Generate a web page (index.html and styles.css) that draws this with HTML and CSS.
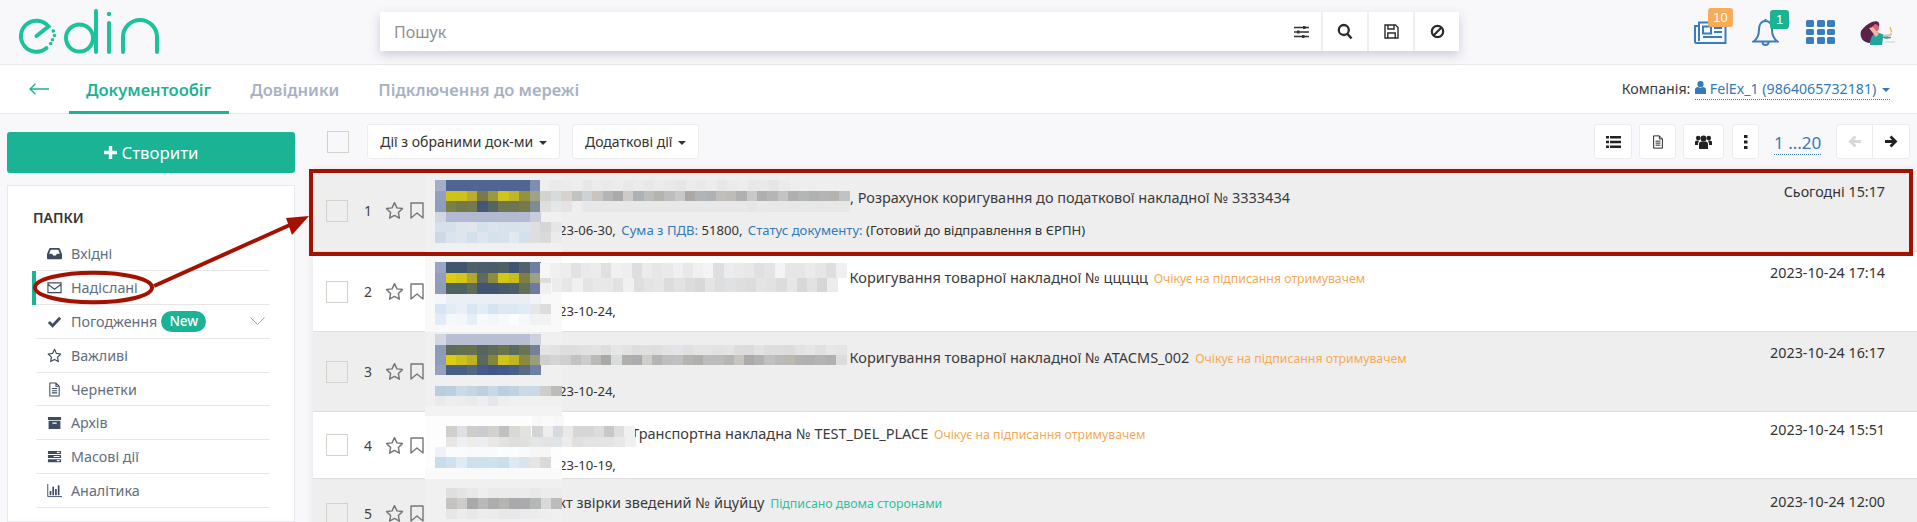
FILE: index.html
```html
<!DOCTYPE html>
<html lang="en">
<head>
    <meta charset="UTF-8">
    <meta name="viewport" content="width=device-width, initial-scale=1.0">
    <title>EDIN - Документообіг</title>
    <link rel="stylesheet" href="styles.css">
</head>
<body>

    <!-- Shared icons -->
    <svg class="icon-defs" xmlns="http://www.w3.org/2000/svg">
        <symbol id="i-star" viewBox="0 0 18 18"><path d="M9 1.6l2.3 4.9 5.2.7-3.8 3.7.9 5.4L9 13.700l-4.600 2.600.9-5.400L1.500 7.200l5.200-.7z" fill="none" stroke="currentColor" stroke-width="1.400" stroke-linejoin="round"/></symbol>
        <symbol id="i-bookmark" viewBox="0 0 16 18"><path d="M2 1.500h12v15l-6-5-6 5z" fill="none" stroke="currentColor" stroke-width="1.400" stroke-linejoin="round"/></symbol>
        <symbol id="i-inbox" viewBox="0 0 16 16"><path fill-rule="evenodd" d="M3.500 2h9c.5 0 .9.3 1.100.7L16 8.500V13a1 1 0 0 1-1 1H1a1 1 0 0 1-1-1V8.500l2.400-5.800C2.600 2.300 3 2 3.500 2zM4 4L2.300 8.300h3.200l1 1.700h3l1-1.700h3.200L12 4z"/></symbol>
        <symbol id="i-envelope" viewBox="0 0 16 16"><path d="M1 3h14v10.500H1zM1 4.500l7 5.300 7-5.300" fill="none" stroke="currentColor" stroke-width="1.200"/></symbol>
        <symbol id="i-check" viewBox="0 0 16 16"><path d="M2 8.500l4 4 8-8.500" fill="none" stroke="currentColor" stroke-width="3"/></symbol>
        <symbol id="i-file" viewBox="0 0 16 16"><path d="M3 1h6.500L13 4.500V15H3zM9.500 1v3.500H13M5.200 7h5.600M5.200 9.300h5.600M5.200 11.600h5.600" fill="none" stroke="currentColor" stroke-width="1.100"/></symbol>
        <symbol id="i-archive" viewBox="0 0 16 16"><path fill-rule="evenodd" d="M1 2h14v3.200H1zM1.700 6.200h12.600V15H1.700zM5.700 8v1.300h4.600V8z"/></symbol>
        <symbol id="i-tasks" viewBox="0 0 16 16"><path fill-rule="evenodd" d="M1 2h14v3.300H1zM1 6.400h14v3.300H1zM1 10.800h14v3.300H1zM10.500 3v1.200h3V3zM7 7.400v1.200h6.500V7.400zM10.500 11.800V13h3v-1.200z"/></symbol>
        <symbol id="i-chart" viewBox="0 0 16 16"><path d="M.8 1v13.500H16" fill="none" stroke="currentColor" stroke-width="1"/><path d="M2.800 8.500h1.800v4.500H2.800zM5.700 4h1.800v9H5.700zM8.600 6.500h1.800V13H8.600zM11.500 2.500h1.800V13h-1.800z"/></symbol>
    </svg>

    <header class="top-bar">
        <svg class="logo" viewBox="0 0 160 55" fill="none" stroke="#1cc29a" stroke-width="4" stroke-linecap="round">
            <path d="M26.500 31L38.500 21.500A15.500 15.500 0 1 0 36.500 43"/>
            <circle cx="69.500" cy="33" r="13.500"/>
            <path d="M86 6V47M99 18V47M113 47V32a17 17 0 0 1 34 0V47"/>
            <g fill="#1cc29a" stroke="none">
                <circle cx="43.300" cy="26" r="1.800"/>
                <circle cx="44.500" cy="30.500" r="1.800"/>
                <circle cx="42.500" cy="34.700" r="1.800"/>
                <circle cx="40.700" cy="38.500" r="1.800"/>
                <circle cx="99" cy="9" r="2.200"/>
            </g>
        </svg>

        <div class="search">
            <input class="search-input" type="text" placeholder="Пошук">
            <span class="search-filter">
                <svg width="17" height="14" viewBox="0 0 17 14"><path d="M1 2.500h15M1 7h15M1 11.500h15" stroke="#333" stroke-width="1.300"/><path d="M10 1h2.500v3H10zM4 5.500h2.500v3H4zM9 10h2.500v3H9z" fill="#333"/></svg>
            </span>
            <button class="search-btn">
                <svg width="16" height="17" viewBox="0 0 16 17" fill="none" stroke="#2b2b2b"><circle cx="6.800" cy="7" r="5" stroke-width="2.300"/><path d="M10.500 11l4 4.500" stroke-width="2.600"/></svg>
            </button>
            <button class="search-btn">
                <svg width="15" height="15" viewBox="0 0 15 15" fill="none" stroke="#2b2b2b" stroke-width="1.400"><path d="M1 1h10.500L14 3.500V14H1z"/><path d="M4 1v4h6V1M3.800 14V9h7.400v5"/></svg>
            </button>
            <button class="search-btn">
                <svg width="15" height="15" viewBox="0 0 15 15" fill="none" stroke="#2b2b2b" stroke-width="2.200"><circle cx="7.500" cy="7.500" r="5.700"/><path d="M3.500 11.500l8-8"/></svg>
            </button>
        </div>

        <div class="top-icons">
            <span class="top-icon top-news">
                <svg width="33" height="23" viewBox="0 0 33 23" fill="none" stroke="#3a7dbd" stroke-width="2"><path d="M5 1.500h26.500V22H2.500a1.500 1.500 0 0 1-1.500-1.500V5h4zM5 5v15"/><path d="M9 5.500h8v7H9zM20 7h8M20 11h8M9 16h19"/></svg>
                <span class="top-badge badge-orange">10</span>
            </span>
            <span class="top-icon top-bell">
                <svg width="27" height="29" viewBox="0 0 27 29" fill="none" stroke="#3a7dbd" stroke-width="2"><path d="M13.500 3c-4.500 0-6.500 4-6.500 8.500 0 6-2 9.500-5.500 12h24c-3.500-2.500-5.500-6-5.500-12C20 7 18 3 13.500 3zM13.500 1v2"/><path d="M10.500 24a3 3 0 0 0 6 0"/></svg>
                <span class="top-badge badge-green">1</span>
            </span>
            <span class="top-icon top-grid">
                <i></i><i></i><i></i><i></i><i></i><i></i><i></i><i></i><i></i>
            </span>
            <span class="top-icon top-avatar">
                <svg width="39" height="25" viewBox="0 0 39 25">
                    <path d="M4 11c3-4 6-7 11-9 3-1 6-1 7 1 1 3-1 5-2 7l-7 13C7 23 2 18 4 11z" fill="#5b2249"/>
                    <path d="M15 7l3-3 3 1 1 4-2 3z" fill="#e5606a"/>
                    <path d="M13 25c0-7 3-12 7-13l5 2c3 1 6 3 9 3v1c-3 1-6 1-8 0l-1 7z" fill="#20a5a0"/>
                    <path d="M12 8l4-1 6 7-3 3z" fill="#f5b5a5"/>
                    <path d="M26 15l7-1 1-2 1 2-1 2-8 1z" fill="#f5b5a5"/>
                    <path d="M33 7l1.500 5" stroke="#e9b33c" stroke-width="1.200"/>
                    <path d="M28 22h10" stroke="#dcdcdc" stroke-width="1.500"/>
                </svg>
            </span>
        </div>
    </header>

    <nav class="nav-bar">
        <svg class="back-arrow" width="20" height="12" viewBox="0 0 20 12" fill="none" stroke="#1ab394" stroke-width="1.300"><path d="M20 6H1M6.500.7L1 6l5.500 5.300"/></svg>
        <a class="tab tab-active">Документообіг</a>
        <a class="tab">Довідники</a>
        <a class="tab">Підключення до мережі</a>
        <div class="company">
            Компанія:
            <span class="company-link">
                <svg width="11" height="13" viewBox="0 0 11 13" fill="#337ab7"><circle cx="5.500" cy="3.200" r="3.100"/><path d="M0 13V8.500C0 7 1.500 6 3 6l2.500 1L8 6c1.500 0 3 1 3 2.500V13z"/></svg>
                FelEx_1 (9864065732181)
                <i class="caret caret-blue"></i>
            </span>
        </div>
    </nav>

    <div class="page">
        <aside class="sidebar">
            <button class="create-btn">
                <svg class="create-plus" width="13" height="13" viewBox="0 0 13 13" fill="#fff"><path d="M4.800 0h3.400v4.800H13v3.400H8.200V13H4.800V8.200H0V4.800h4.800z"/></svg>
                Створити
            </button>

            <div class="folders">
                <h5 class="folders-title">ПАПКИ</h5>
                <ul class="folder-list">
                    <li class="folder"><svg class="folder-icon"><use href="#i-inbox"/></svg>Вхідні</li>
                    <li class="folder folder-active"><svg class="folder-icon"><use href="#i-envelope"/></svg>Надіслані</li>
                    <li class="folder">
                        <svg class="folder-icon"><use href="#i-check"/></svg>Погодження
                        <span class="tag-new">New</span>
                        <svg class="folder-chevron" width="15" height="8" viewBox="0 0 15 8" fill="none" stroke="#9aa3b0"><path d="M.5.500l7 7 7-7"/></svg>
                    </li>
                    <li class="folder"><svg class="folder-icon"><use href="#i-star"/></svg>Важливі</li>
                    <li class="folder"><svg class="folder-icon"><use href="#i-file"/></svg>Чернетки</li>
                    <li class="folder"><svg class="folder-icon"><use href="#i-archive"/></svg>Архів</li>
                    <li class="folder"><svg class="folder-icon"><use href="#i-tasks"/></svg>Масові дії</li>
                    <li class="folder"><svg class="folder-icon"><use href="#i-chart"/></svg>Аналітика</li>
                </ul>
            </div>
        </aside>

        <main class="content">
            <div class="toolbar">
                <span class="check"></span>
                <button class="tool-btn tool-actions">Дії з обраними док-ми <i class="caret"></i></button>
                <button class="tool-btn tool-more">Додаткові дії <i class="caret"></i></button>

                <div class="tool-right">
                    <button class="tool-btn tool-icon tool-list">
                        <svg width="15" height="12" viewBox="0 0 15 12" fill="#222"><path d="M0 0h3v2.400H0zM4 0h11v2.400H4zM0 4.800h3v2.400H0zM4 4.800h11v2.400H4zM0 9.600h3V12H0zM4 9.600h11V12H4z"/></svg>
                    </button>
                    <button class="tool-btn tool-icon tool-doc">
                        <svg width="14" height="16" viewBox="0 0 16 16" color="#222"><use href="#i-file"/></svg>
                    </button>
                    <button class="tool-btn tool-icon tool-users">
                        <svg width="17" height="14" viewBox="0 0 17 14" fill="#222"><circle cx="8.500" cy="3.500" r="3"/><circle cx="3.200" cy="3" r="2.300"/><circle cx="13.800" cy="3" r="2.300"/><path d="M4 14V9c0-1.500 1-2.500 2.500-2.500h4C12 6.500 13 7.500 13 9v5zM0 10V7.500C0 6.300.8 5.600 2 5.600h2l-1 3v1.400zM17 10V7.500c0-1.200-.8-1.900-2-1.900h-2l1 3v1.400z"/></svg>
                    </button>
                    <button class="tool-btn tool-icon tool-dots">
                        <svg width="4" height="14" viewBox="0 0 4 14" fill="#222"><path d="M0 0h3.500v3H0zM0 5.500h3.500v3H0zM0 11h3.500v3H0z"/></svg>
                    </button>
                    <span class="pager">1 ...20</span>
                    <div class="pager-arrows">
                        <button class="tool-btn tool-icon tool-prev">
                            <svg width="14" height="13" viewBox="0 0 14 13" fill="none" stroke="#d8d8d8" stroke-width="2.800"><path d="M13 6.500H3M7.500 1.500l-5 5 5 5"/></svg>
                        </button>
                        <button class="tool-btn tool-icon tool-next">
                            <svg width="14" height="13" viewBox="0 0 14 13" fill="none" stroke="#222" stroke-width="2.800"><path d="M1 6.500h10M6.500 1.500l5 5-5 5"/></svg>
                        </button>
                    </div>
                </div>
            </div>

            <section class="doc-list">
                <article class="doc doc-grey doc-first">
                    <span class="check"></span>
                    <span class="doc-num">1</span>
                    <svg class="doc-star"><use href="#i-star"/></svg>
                    <svg class="doc-mark"><use href="#i-bookmark"/></svg>
                    <div class="doc-body">
                        <div class="doc-title title-long">, Розрахунок коригування до податкової накладної № 3333434</div>
                        <div class="doc-sub">23-06-30, <span class="sub-key">Сума з ПДВ:</span> 51800, <span class="sub-key">Статус документу:</span> (Готовий до відправлення в ЄРПН)</div>
                    </div>
                    <time class="doc-date">Сьогодні 15:17</time>
                </article>

                <article class="doc">
                    <span class="check"></span>
                    <span class="doc-num">2</span>
                    <svg class="doc-star"><use href="#i-star"/></svg>
                    <svg class="doc-mark"><use href="#i-bookmark"/></svg>
                    <div class="doc-body">
                        <div class="doc-title title-wide">Коригування товарної накладної № ццццц <span class="status-wait">Очікує на підписання отримувачем</span></div>
                        <div class="doc-sub">23-10-24,</div>
                    </div>
                    <time class="doc-date">2023-10-24 17:14</time>
                </article>

                <article class="doc doc-grey">
                    <span class="check"></span>
                    <span class="doc-num">3</span>
                    <svg class="doc-star"><use href="#i-star"/></svg>
                    <svg class="doc-mark"><use href="#i-bookmark"/></svg>
                    <div class="doc-body">
                        <div class="doc-title title-wide">Коригування товарної накладної № ATACMS_002 <span class="status-wait">Очікує на підписання отримувачем</span></div>
                        <div class="doc-sub">23-10-24,</div>
                    </div>
                    <time class="doc-date">2023-10-24 16:17</time>
                </article>

                <article class="doc doc-short">
                    <span class="check"></span>
                    <span class="doc-num">4</span>
                    <svg class="doc-star"><use href="#i-star"/></svg>
                    <svg class="doc-mark"><use href="#i-bookmark"/></svg>
                    <div class="doc-body">
                        <div class="doc-title title-mid">Транспортна накладна № TEST_DEL_PLACE <span class="status-wait">Очікує на підписання отримувачем</span></div>
                        <div class="doc-sub">23-10-19,</div>
                    </div>
                    <time class="doc-date">2023-10-24 15:51</time>
                </article>

                <article class="doc doc-grey doc-last">
                    <span class="check"></span>
                    <span class="doc-num">5</span>
                    <svg class="doc-star"><use href="#i-star"/></svg>
                    <svg class="doc-mark"><use href="#i-bookmark"/></svg>
                    <div class="doc-body">
                        <div class="doc-title title-short">Акт звірки зведений № йцуйцу <span class="status-done">Підписано двома сторонами</span></div>
                    </div>
                    <time class="doc-date">2023-10-24 12:00</time>
                </article>
            </section>
        </main>
    </div>

    <!-- Blurred-out customer data and the red annotation drawn over the screenshot -->
    <svg class="overlay" width="1917" height="522" viewBox="0 0 1917 522">
        <g id="mosaic" shape-rendering="crispEdges"></g>
        <g fill="none" stroke="#a31200" stroke-width="4">
            <rect x="311" y="171" width="1600" height="83"/>
            <ellipse cx="93.500" cy="287.500" rx="58.500" ry="14.800"/>
            <path d="M154 286L292 224"/>
        </g>
        <path d="M309 216L286 218L292 235z" fill="#a31200"/>
    </svg>

    <script src="mosaic.js"></script>
</body>
</html>
```

FILE: styles.css
```css
* {
    box-sizing: border-box;
}
html, body {
    height: 522px;
    overflow: hidden;
}
body {
    position: relative;
    margin: 0;
    background-color: #f8f8fb;
    color: #333;
    font-family: "Noto Sans", "Open Sans", sans-serif;
    font-size: 14px;
}
button {
    font-family: inherit;
    cursor: pointer;
}
.icon-defs {
    display: none;
}

/* Top bar */
.top-bar {
    display: flex;
    align-items: center;
    height: 65px;
    padding: 0 21px 0 10px;
    border-bottom: 1px solid #e7e9ef;
}
.logo {
    flex: none;
    width: 160px;
    height: 55px;
    margin-right: 210px;
}
.search {
    display: flex;
    align-items: stretch;
    width: 1079px;
    height: 39px;
    margin-top: -1px;
    background-color: #fff;
    box-shadow: 0 4px 10px rgba(70, 75, 110, 0.25);
}
.search-input {
    flex: 1;
    min-width: 0;
    padding: 0 14px;
    border: none;
    outline: none;
    color: #555;
    font-family: inherit;
    font-size: 16px;
}
.search-input::placeholder {
    color: #8f8f8f;
}
.search-filter {
    display: flex;
    align-items: center;
    padding-right: 11px;
}
.search-btn {
    display: flex;
    align-items: center;
    justify-content: center;
    width: 46px;
    padding: 0;
    border: none;
    border-left: 2px solid #eeeeee;
    background: none;
}
.top-icons {
    display: flex;
    align-items: center;
    margin-left: auto;
}
.top-icon {
    position: relative;
    display: block;
}
.top-icon svg {
    display: block;
}
.top-bell {
    margin-left: 25px;
}
.top-grid {
    display: grid;
    grid-template-columns: repeat(3, 8px);
    grid-auto-rows: 6.5px;
    gap: 2px 2.5px;
    margin-left: 27px;
}
.top-grid i {
    border-radius: 1.5px;
    background-color: #3a7dbd;
}
.top-avatar {
    margin-left: 22px;
}
.top-badge {
    position: absolute;
    top: -13px;
    height: 19px;
    border-radius: 3px;
    color: #fff;
    font-family: "Liberation Sans", sans-serif;
    font-size: 13px;
    line-height: 19px;
    text-align: center;
}
.badge-orange {
    left: 14px;
    width: 25px;
    background-color: #f8ac59;
}
.badge-green {
    top: -8px;
    left: 18px;
    width: 19px;
    background-color: #1ab394;
}

/* Tabs */
.nav-bar {
    display: flex;
    align-items: center;
    height: 49px;
    padding: 0 27px 0 29px;
    border-bottom: 1px solid #e7e9ef;
    background-color: #fff;
}
.back-arrow {
    flex: none;
    margin-right: 20px;
}
.tab {
    display: flex;
    align-items: center;
    height: 49px;
    padding: 0 18px;
    margin-right: 3px;
    color: #a8b1c2;
    font-size: 16.5px;
    font-weight: 600;
}
.tab-active {
    padding: 3px 18px 0 17px;
    border-bottom: 3px solid #1ab394;
    color: #1ab394;
}
.company {
    margin-left: auto;
    color: #3a3a3a;
    font-size: 14.200px;
}
.company-link {
    display: inline-block;
    margin-left: 1px;
    padding-bottom: 1px;
    border-bottom: 1px dotted #337ab7;
    color: #337ab7;
}
.caret {
    display: inline-block;
    margin-left: 2px;
    border-top: 4px solid #333;
    border-right: 4px solid transparent;
    border-left: 4px solid transparent;
    vertical-align: 2px;
}
.caret-blue {
    border-top-color: #337ab7;
}

/* Layout */
.page {
    display: flex;
    height: 408px;
    overflow: hidden;
}
.sidebar {
    flex: none;
    width: 313px;
    padding: 18px 18px 0 7px;
}
.create-btn {
    display: flex;
    align-items: center;
    justify-content: center;
    gap: 5px;
    width: 100%;
    height: 41px;
    border: none;
    border-radius: 3px;
    background-color: #1ab394;
    color: #fff;
    font-size: 16.8px;
}
.create-plus {
    flex: none;
}
.folders {
    height: 337px;
    margin-top: 12px;
    padding: 22px 24px 0 28px;
    border: 1px solid #e8e8f0;
    background-color: #fff;
}
.folders-title {
    margin: 0 0 10.5px -3px;
    color: #333;
    font-size: 14px;
    font-weight: 600;
}
.folder-list {
    margin: 0;
    padding: 0;
    list-style: none;
}
.folder {
    display: flex;
    align-items: center;
    height: 33.800px;
    padding-left: 11px;
    border-bottom: 1px solid #e7e7e7;
    color: #626d7e;
    font-size: 14.300px;
}
.folder-active {
    box-shadow: -4px 0 0 #1ab394;
}
.folder-icon {
    flex: none;
    width: 15px;
    height: 15px;
    margin-right: 9px;
    color: #3d4c62;
    fill: #3d4c62;
}
.tag-new {
    margin-left: 4px;
    padding: 0 8px;
    border-radius: 11px;
    background-color: #1ab394;
    color: #fff;
    font-size: 13.500px;
    font-weight: 500;
    line-height: 21px;
}
.folder-chevron {
    margin-left: auto;
    margin-right: 5px;
}

/* Document toolbar */
.content {
    flex: 1;
    min-width: 0;
}
.toolbar {
    display: flex;
    align-items: center;
    height: 35px;
    margin-top: 10px;
    padding: 0 7px 0 14px;
}
.check {
    flex: none;
    display: block;
    width: 22px;
    height: 22px;
    border: 1px solid #d5d2cc;
}
.tool-btn {
    height: 35px;
    padding: 0;
    border: 1px solid #ececec;
    border-radius: 3px;
    background-color: #fff;
    color: #333;
    font-size: 14px;
}
.tool-actions {
    width: 193px;
    margin-left: 18px;
}
.tool-more {
    width: 127px;
    margin-left: 12px;
}
.tool-right {
    display: flex;
    align-items: center;
    margin-left: auto;
}
.tool-icon {
    display: flex;
    align-items: center;
    justify-content: center;
}
.tool-list {
    width: 38px;
}
.tool-doc {
    width: 37px;
    margin-left: 7px;
}
.tool-users {
    width: 41px;
    margin-left: 7px;
}
.tool-dots {
    width: 27px;
    margin-left: 8px;
}
.pager {
    width: 47px;
    margin: 3px 15px 0 15px;
    border-bottom: 1px dotted #337ab7;
    color: #337ab7;
    font-size: 17px;
    line-height: 22px;
    text-align: center;
    white-space: nowrap;
}
.pager-arrows {
    display: flex;
}
.tool-prev {
    width: 37px;
    border-radius: 3px 0 0 3px;
}
.tool-next {
    width: 38px;
    margin-left: -1px;
    border-radius: 0 3px 3px 0;
}

/* Document rows */
.doc-list {
    margin-top: 11px;
    box-shadow: 0 0 8px rgba(60, 60, 90, 0.12);
}
.doc {
    display: flex;
    align-items: center;
    height: 80px;
    padding: 0 32px 0 13px;
    border-bottom: 1px solid #dedede;
    background-color: #fff;
}
.doc-grey {
    background-color: #eeeeee;
}
.doc-first {
    height: 82px;
}
.doc-short {
    height: 67px;
}
.doc-last {
    height: 70px;
}
.doc-num {
    flex: none;
    width: 21px;
    margin-left: 16px;
    color: #444;
    font-size: 14px;
}
.doc-star {
    flex: none;
    width: 19px;
    height: 19px;
    color: #777;
}
.doc-mark {
    flex: none;
    width: 16px;
    height: 19px;
    margin-left: 5px;
    margin-right: 10px;
    color: #777;
}
.doc-body {
    flex: 1;
    align-self: flex-start;
    min-width: 0;
    padding-top: 15px;
}
.doc-first .doc-body {
    padding-top: 17px;
}
.doc-short .doc-body {
    padding-top: 11px;
}
.doc-last .doc-body {
    padding-top: 13px;
}
.doc-title {
    color: #3b3b3b;
    font-size: 14.500px;
    line-height: 20px;
    white-space: nowrap;
}
.title-long {
    padding-left: 415px;
}
.title-wide {
    padding-left: 414.5px;
}
.title-mid {
    padding-left: 196px;
}
.title-short {
    padding-left: 114px;
}
.doc-sub {
    margin-top: 12px;
    padding-left: 124px;
    color: #333;
    font-size: 13.100px;
    line-height: 20px;
}
.doc-first .doc-sub {
    margin-top: 13px;
}
.doc-short .doc-sub {
    margin-top: 10px;
}
.sub-key {
    margin-left: 2px;
    color: #337ab7;
}
.status-wait {
    margin-left: 2px;
    color: #f4a956;
    font-size: 12.300px;
}
.status-done {
    margin-left: 2px;
    color: #2cbfa0;
    font-size: 12.300px;
}
.doc-date {
    flex: none;
    align-self: flex-start;
    margin-top: 11px;
    color: #333;
    font-size: 14.300px;
    line-height: 20px;
}
.doc-first .doc-date {
    margin-top: 12px;
}
.doc-short .doc-date {
    margin-top: 8px;
}
.doc-last .doc-date {
    margin-top: 13px;
}

/* Overlay */
.overlay {
    position: absolute;
    top: 0;
    left: 0;
    pointer-events: none;
}
```

FILE: mosaic.js
```js
// Pixelated patches over customer data: [x, y, cell width, cell height, colours]
const g = (c, n) => Array(n).fill(c);

const patches = [
    // row 1
    [425, 172, 136, 80, ['#f0f0f0']],
    [435, 180, 10.5, 10.5, ['#a3aec8', ...g('#4f6593', 8), '#7f8db0']],
    [540, 180, 10.4, 10.5, ['#eeeeee', '#eaeaea', '#ebebeb', '#ededed', '#e8e8e8', '#ebebeb', '#eaeaea', '#ececec', '#e9e9e9', '#ebebeb', '#e8e8e8', '#ebebeb', '#e9e9e9', '#e6e6e6', '#ebebeb', '#e9e9e9', '#ececec', '#e7e7e7', '#ebebeb', '#ededed', '#e8e8e8', '#e9e9e9', '#e6e6e6', '#ebebeb', '#eeeeee', '#eeeeee']],
    [435, 190.500, 10.5, 10.5, ['#929fbd', '#cfc21a', '#cec11c', '#b8ad30', '#79794a', '#9a9840', '#d0c31a', '#c0b52a', '#95923e', '#9fa284', '#d2d2d0']],
    [551, 190.500, 10.3, 10.5, ['#d8dbdb', '#d6d3cf', '#c2c2c0', '#cdd2d4', '#c9c4c0', '#b2b6b8', '#aaaaaa', '#cfcaca', '#abb2b6', '#bcbcb9', '#b4b3b0', '#bcbdbc', '#c8c8c8', '#aca8a4', '#b0b4b7', '#aeb1b3', '#bfbebb', '#bdbcb8', '#b0b0b0', '#c6c8ca', '#afafaf', '#b4b6b5', '#c5c3bf', '#aeb0b2', '#b4b5b5', '#afb0b2', '#b3b4b6', '#b6b3ae', '#c0c2c4']],
    [435, 201, 10.5, 10.5, ['#909ebd', '#7e7f45', '#73784e', '#767a4c', '#445774', '#546661', '#6e7550', '#6f7552', '#767a4b', '#7f8b96', '#dedede']],
    [551, 201, 10.3, 10.5, ['#e6e8e8', '#e4e4e4', '#eeeeee', ...g('#e8e8e8', 16), '#e6e6e6', '#e9e9e9', ...g('#e7e7e7', 8)]],
    [435, 211.500, 10.5, 10, ['#d2d6e2', ...g('#b1bad0', 8), '#c7cddc']],
    [435, 221.500, 10.5, 10.5, ['#d5e0ea', '#d6e0ea', '#dfe5ea', '#e0e6ec', '#d6e0ea', '#dbe4ec', '#d8e2ec', '#d8e2ec', '#d9e3ec', '#dedede', '#d6d6d6', '#e6e6e6']],
    [435, 232, 10.5, 10.5, ['#ccdae8', '#dbe4ec', '#dfe5ee', '#d4e0ec', '#dee5ee', '#d5e1ec', '#d6e2ec', '#e2e8ee', '#d4e0ec', '#dededc', '#dadada', '#ebebeb']],

    // row 2
    [425, 253, 136, 79, ['#f9f9f9']],
    [435, 262, 10.5, 10.5, ['#99a5c2', '#3f5570', '#40566f', '#4f6068', '#4c5e6a', '#4b5e68', '#505f68', '#3e5470', '#51626a', '#6f7fa3']],
    [435, 272.500, 10.5, 10.5, ['#919fbc', '#dccd10', '#d4c716', '#b2a82e', '#5d6a5c', '#8d8c3e', '#d3c616', '#c9bd1e', '#7d7f48', '#9ea282', '#dddddd']],
    [435, 283, 10.5, 10.5, ['#8f9dbb', '#50625f', '#4f6262', '#5f6c5a', '#3f5572', '#3f5572', '#48596a', '#4a5d68', '#637056', '#6b7ca0', '#f0f0f0']],
    [540, 263, 10.200, 15, ['#f6f6f6', '#f0f0f0', '#ededed', '#e2e2e2', '#eaeaea', '#ececec', '#e0e0e0', '#f1f1f1', '#eeeeee', '#dedede', '#ebebeb', '#e6e6e6', '#e9e9e9', '#efefef', '#e8e8ea', '#f0f0f0', '#f4f4f4', '#dedede', '#ececec', '#eaeaea', '#e8e8e6', '#e2e0de', '#e2e4e8', '#f4f4f4', '#e6e6e6', '#e6e6e6', '#ecebe9', '#e4e6e8', '#dedede', '#f0f0f0']],
    [552, 278, 10.200, 14, ['#ececec', '#e6e6e6', '#f0f0f0', '#e4e4e4', '#e8e8e8', '#e8e8e8', '#e2e2e2', '#f0f0f0', '#dedede', '#e4e4e4', '#e6e6e6', '#dcdcdc', '#e2e2e2', '#dcdcdc', '#d8d8d6', '#e4e4e4', '#dedede', '#dfe2e5', '#dedede', '#dcdcdc', '#e4e4e4', '#e2e2e2', '#dcdcdc', '#e6e6e6', '#d8d8d8', '#e2e2e2', '#d6d6d6', '#ececec']],
    [435, 293.500, 10.5, 10, ['#f4f6fa', ...g('#eceef5', 8), '#f2f3f8']],
    [435, 303.500, 10.5, 10.5, ['#d8e5f2', '#e2ecf5', '#e8eff6', '#d8e6f1', '#e2ecf6', '#d6e4f1', '#dde8f3', '#dce8f4', '#e0ebf5', '#e6e6e6', '#dcdcdc']],
    [435, 314, 10.5, 10.5, ['#e2ecf6', '#f5f8fb', '#f3f7fb', '#e6eef6', '#f6f9fc', '#f2f6fb', '#f7fafd', '#fcfdfe', '#f4f7fb', '#f2f2f2', '#f2f2f2']],

    // row 3
    [425, 333, 136, 78, ['#f0f0f0']],
    [435, 334, 10.5, 11, ['#d4d7e2', ...g('#b8bfd2', 8), '#ccd1de']],
    [435, 345, 10.5, 10, ['#8d9bb9', '#5e6b55', '#63704f', '#66704f', '#56655c', '#5e6c54', '#67734e', '#5a6958', '#6a7450', '#738299']],
    [540, 345, 10.200, 10, ['#e4e4e4', '#e2e2e2', '#dedede', '#dcdfe0', '#e0e0e0', '#e2e2e2', '#dedede', '#e6e6e6', '#e2e2e2', '#dcdee2', '#dfdfdf', '#dedede', '#e2e2e6', '#e2e4e8', '#e0e0e0', '#e4e4e4', '#e2e4e6', '#e2e2e2', '#e4e4e0', '#dcdde0', '#dcdcdc', '#e2e2e2', '#dddee2', '#dedede', '#dcdcdc', '#e2e2e2', '#e6e6e6', '#e0e0e0', '#e6e6e6', '#e4e4e4']],
    [435, 355, 10.5, 10, ['#8e9cba', '#dccd10', '#cdc11a', '#bdb226', '#5b6a5c', '#84853f', '#d0c41a', '#c1b622', '#8a8a3e', '#9a9e80']],
    [540, 355, 10.200, 10, ['#cfcfcd', '#d4d4d4', '#cfcfcf', '#c2c2c2', '#cccccc', '#bcbab6', '#a9a9a9', '#d8dcdc', '#b1afab', '#acacac', '#cfcdc9', '#b4b4b4', '#bebebe', '#c0c0c0', '#b4b4b0', '#b0b0ae', '#bcbcbc', '#bbbcbc', '#b6b6b4', '#c8c5c0', '#aaaaaa', '#b2b2b2', '#c0c0c0', '#bababa', '#bdb8b2', '#b2b2b2', '#b0b0b0', '#b4b4b4', '#b0b0b0', '#dcdcdc']],
    [435, 365, 10.5, 10, ['#95a2bf', '#4a5f84', '#4a5f84', '#55677f', '#45598a', '#425788', '#44598a', '#4a5f84', '#596b7c', '#6f80a5']],
    [435, 386, 10.5, 10, ['#b8cde0', '#bccfe1', '#ccd9e6', '#c6d5e4', '#bdd0e2', '#c9d8e6', '#bccfe2', '#bfd2e3', '#cddae6', '#cbd8e5', '#cecdcb', '#bcbcba']],
    [435, 396, 10.5, 10, ['#e8eaec', '#eeeeee', '#ececec', '#e8eaec', '#eeeeee', '#e4e8ec', '#eeeeee']],
    [425, 406, 136, 10, ['#f3f3f3']],

    // row 4
    [425, 416, 136, 63, ['#fdfdfd']],
    [446, 426, 10.5, 11, ['#d0cfcc', '#dfe0e3', '#cfcdca', '#c9cbce', '#d3d1ce', '#c0c0be', '#d8d8d6', '#e3e2de']],
    [532, 416, 10.5, 10, ['#f8f8f8', '#fafafa', '#f8f8f8']],
    [532, 426, 10.5, 11, ['#d2d4d8', '#eeeeee', '#d4dadf']],
    [563, 426, 10.200, 11, ['#e9e9e9', '#d6d6d6', '#d6d6d6', '#dcdcdc', '#c8c8c8', '#dedede', '#f0f0f0']],
    [446, 437, 10.5, 10, ['#e6e6e6', '#eff0f2', '#ececec', '#ecedef', '#e8e8e6', '#e2e2e0', '#dedede', '#e0e0de', '#e4e6e6', '#e4e4e4', '#e0e4e4', '#ececec', '#e0e0e0', '#e2e4e4', '#e4e4e4', '#e4e4e4', '#e8e8e8', '#f0f0f0']],
    [435, 447, 10.5, 10, ['#eef2f8', '#fafbfd', '#fafbfd', '#f8fafc', '#f8fafc', '#f8fafc', '#fafcfd', '#fafcfd', '#f8fafc', '#f6f6f6', '#f6f6f6']],
    [435, 457, 10.5, 11, ['#c8dcec', '#cfe1ef', '#e0ebf4', '#cee0ee', '#cde0ee', '#cfe0ee', '#cbdeec', '#dde9f3', '#d7e5f1', '#e6e5e3', '#dadad8']],
    [425, 468, 136, 10, ['#fafafa']],

    // row 5
    [425, 479, 136, 43, ['#f0f0f0']],
    [446, 488, 10.5, 10, ['#e0dfdd', '#e4e4e4', '#e8e8e8', '#eeeeee', '#eaeaea', '#ebebeb', '#ebebeb', '#ececec', '#e8e8e8', '#ececec', '#ececec']],
    [446, 498, 10.5, 11, ['#c4c3c1', '#cdccca', '#a9a9a9', '#b8b9b8', '#adadab', '#b5b6b4', '#a9aaac', '#abaaaa', '#b6b8b8', '#d9d9d8', '#bcbcbc']],
    [446, 509, 10.5, 10, ['#e6e6e6', '#ececec', '#e8e8e8', '#ececec', '#ebebeb', '#e8e8e8', '#e6e8ec', '#ebebeb', '#ececec', '#eeeeee']]
];

const layer = document.getElementById('mosaic');
patches.forEach(([x, y, w, h, colours]) => {
    colours.forEach((colour, i) => {
        const cell = document.createElementNS('http://www.w3.org/2000/svg', 'rect');
        cell.setAttribute('x', x + i * w);
        cell.setAttribute('y', y);
        cell.setAttribute('width', w + 0.5);
        cell.setAttribute('height', h);
        cell.setAttribute('fill', colour);
        layer.appendChild(cell);
    });
});
```
